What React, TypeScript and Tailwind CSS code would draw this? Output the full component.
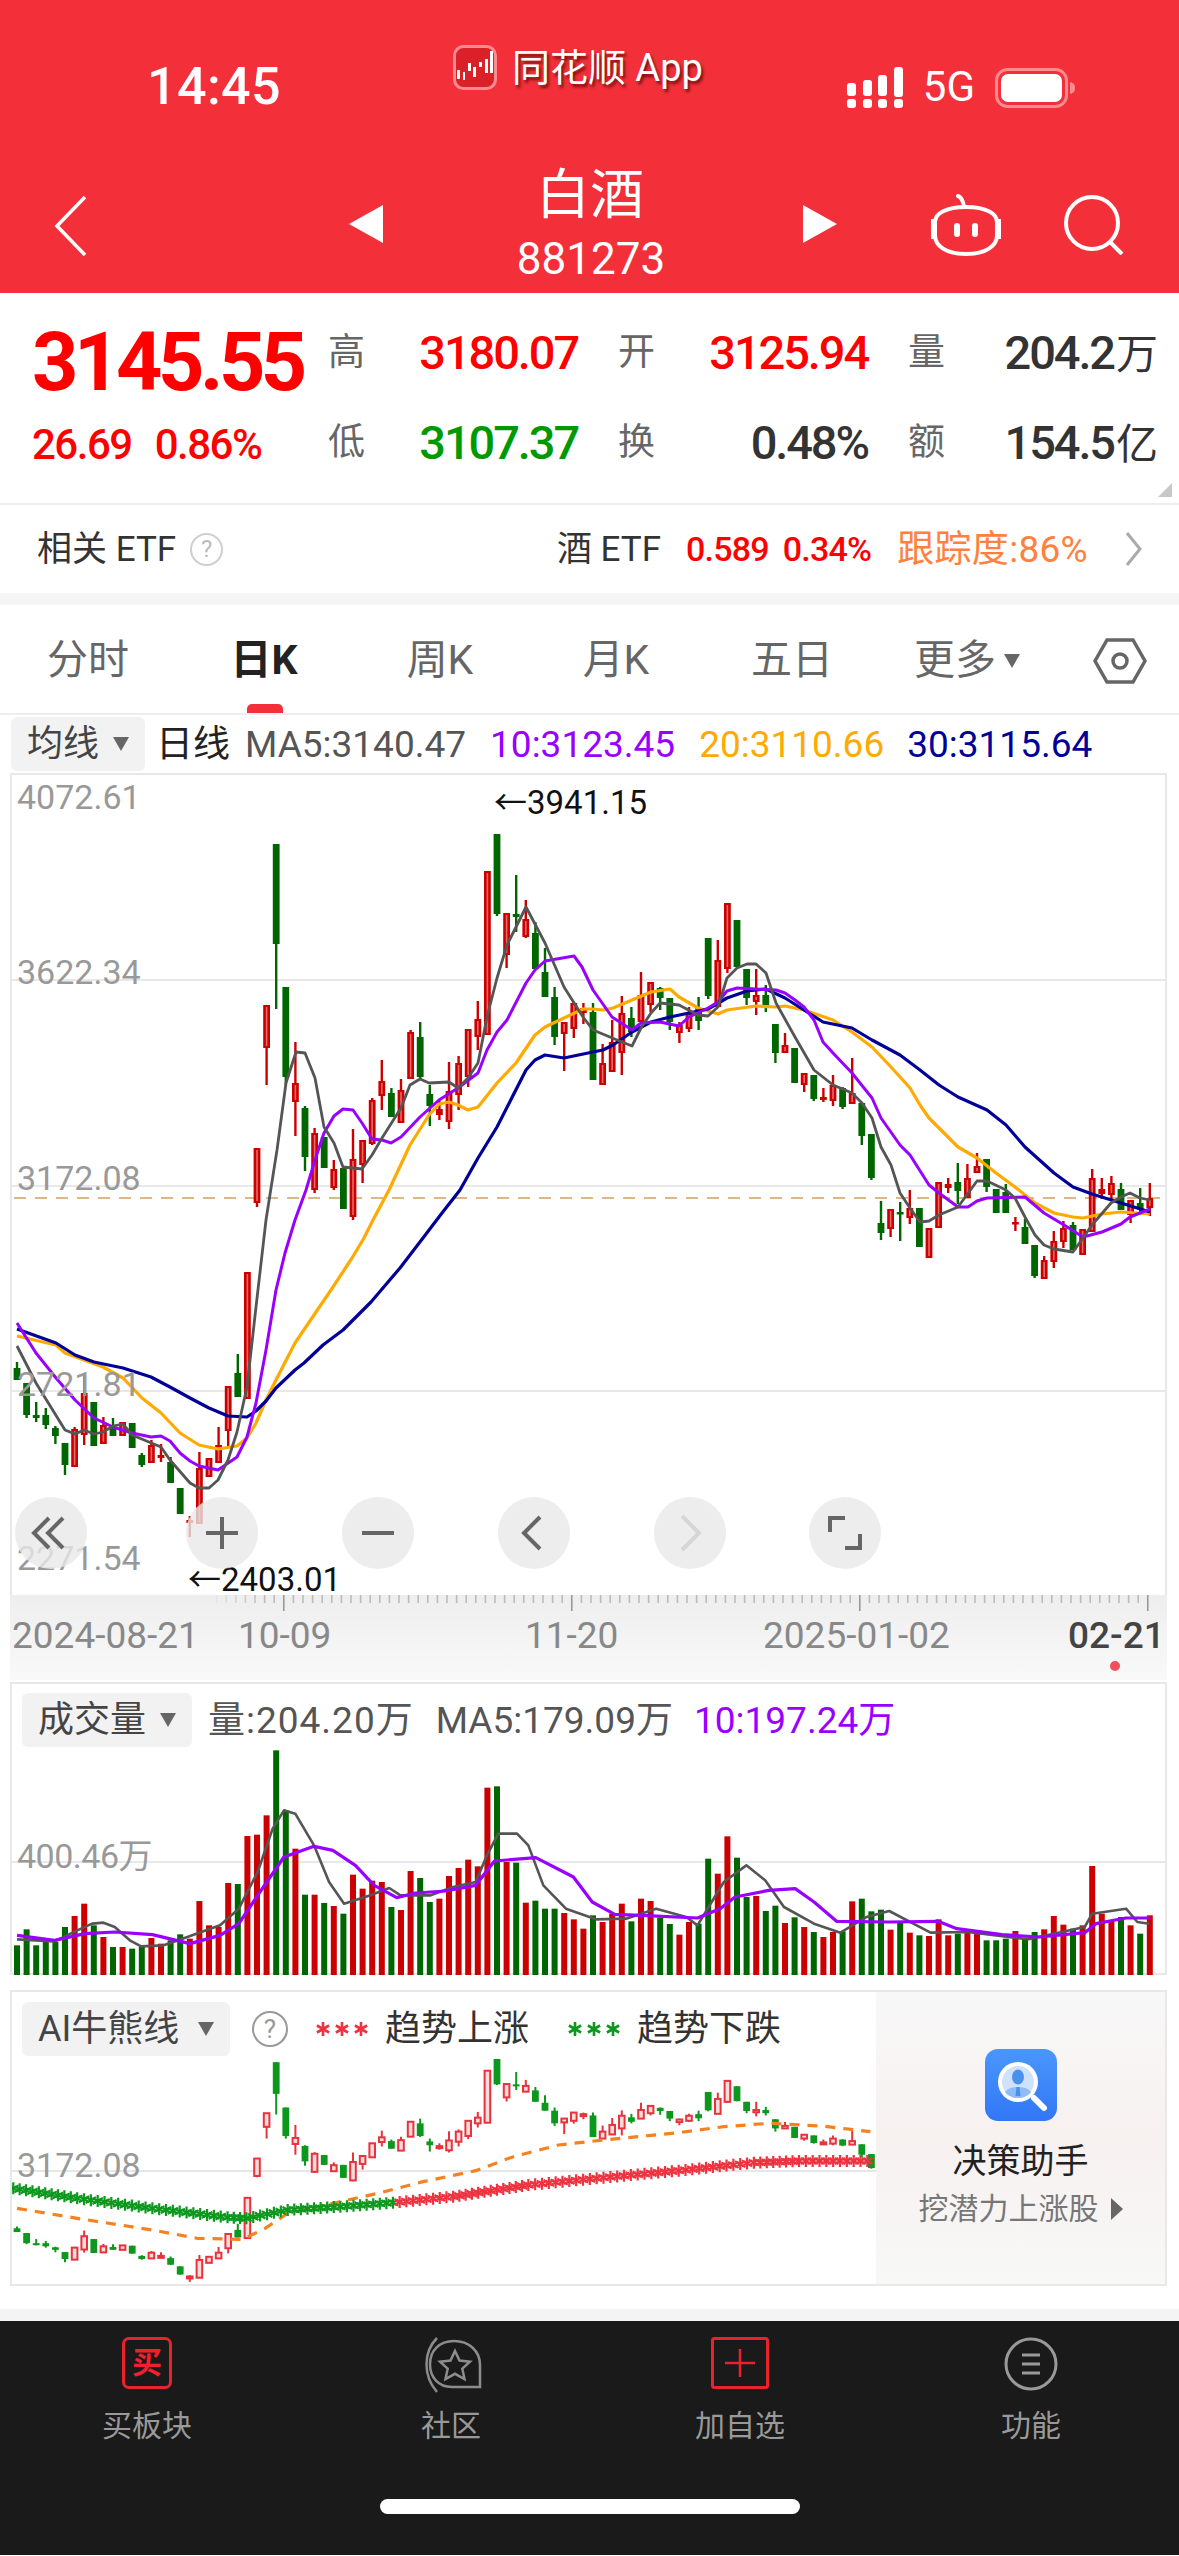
import type { ReactNode } from "react";

type Candle = [number, number, number, number, number];
type Pt = [number, number];

// [up, high, bodyTop, bodyBottom, low], y in page px
const CANDLES: Candle[] = [
  [0, 1362, 1368, 1380, 1380], [0, 1383, 1383, 1415, 1418], [0, 1402, 1415, 1418, 1422], [0, 1408, 1415, 1425, 1429],
  [0, 1426, 1428, 1436, 1444], [0, 1443, 1443, 1465, 1475], [1, 1427, 1429, 1467, 1467], [1, 1375, 1393, 1435, 1445],
  [0, 1402, 1402, 1446, 1446], [1, 1417, 1425, 1444, 1444], [0, 1418, 1427, 1436, 1436], [1, 1422, 1422, 1436, 1436],
  [0, 1423, 1423, 1448, 1448], [0, 1453, 1455, 1465, 1467], [1, 1440, 1445, 1463, 1463], [1, 1444, 1455, 1458, 1462],
  [0, 1457, 1462, 1483, 1483], [0, 1488, 1488, 1514, 1514], [1, 1516, 1520, 1523, 1537], [1, 1452, 1468, 1524, 1524],
  [1, 1458, 1458, 1477, 1477], [1, 1427, 1445, 1463, 1463], [1, 1386, 1386, 1431, 1447], [0, 1354, 1373, 1397, 1397],
  [1, 1272, 1272, 1399, 1399], [1, 1148, 1148, 1203, 1207], [1, 1005, 1005, 1048, 1085], [0, 844, 844, 944, 1009],
  [0, 987, 987, 1077, 1085], [1, 1042, 1083, 1102, 1136], [0, 1106, 1108, 1157, 1171], [1, 1128, 1133, 1190, 1193],
  [0, 1137, 1137, 1168, 1168], [1, 1160, 1169, 1188, 1190], [0, 1168, 1168, 1209, 1209], [1, 1129, 1159, 1217, 1220],
  [1, 1140, 1140, 1165, 1183], [1, 1098, 1100, 1144, 1145], [1, 1060, 1081, 1096, 1110], [0, 1088, 1093, 1117, 1117],
  [1, 1079, 1090, 1123, 1123], [1, 1030, 1032, 1079, 1079], [0, 1022, 1037, 1077, 1080], [0, 1085, 1094, 1106, 1126],
  [1, 1100, 1109, 1115, 1120], [1, 1062, 1091, 1122, 1129], [1, 1056, 1063, 1095, 1110], [1, 1029, 1029, 1077, 1087],
  [1, 1001, 1019, 1037, 1050], [1, 871, 871, 1035, 1035], [0, 834, 834, 914, 916], [1, 913, 913, 955, 968],
  [0, 875, 914, 917, 932], [1, 900, 919, 937, 938], [0, 922, 933, 969, 969], [0, 948, 972, 997, 997],
  [0, 987, 997, 1037, 1045], [1, 1022, 1022, 1034, 1071], [1, 1002, 1003, 1029, 1038], [1, 1003, 1008, 1013, 1024],
  [0, 1003, 1012, 1080, 1080], [1, 1044, 1063, 1085, 1085], [1, 1020, 1042, 1072, 1072], [1, 996, 1013, 1053, 1075],
  [0, 1007, 1018, 1032, 1037], [1, 972, 995, 1022, 1022], [1, 982, 982, 1005, 1012], [0, 987, 988, 998, 1010],
  [0, 998, 998, 1022, 1030], [1, 1022, 1025, 1033, 1043], [1, 1007, 1013, 1029, 1032], [0, 997, 1008, 1021, 1030],
  [0, 938, 938, 996, 999], [1, 940, 960, 1007, 1007], [1, 903, 903, 969, 973], [0, 920, 920, 967, 967],
  [0, 969, 969, 998, 1005], [1, 969, 995, 1002, 1015], [0, 985, 995, 1005, 1012], [0, 1024, 1024, 1053, 1063],
  [1, 1033, 1045, 1053, 1053], [0, 1048, 1048, 1083, 1083], [1, 1073, 1073, 1085, 1092], [0, 1075, 1075, 1099, 1101],
  [1, 1088, 1097, 1100, 1102], [1, 1075, 1085, 1101, 1106], [0, 1087, 1088, 1107, 1109], [1, 1058, 1093, 1104, 1104],
  [0, 1103, 1103, 1136, 1145], [0, 1134, 1134, 1178, 1180], [0, 1201, 1223, 1233, 1240], [1, 1209, 1209, 1229, 1237],
  [0, 1202, 1212, 1214, 1241], [1, 1190, 1208, 1218, 1224], [0, 1208, 1208, 1247, 1247], [1, 1228, 1228, 1258, 1258],
  [1, 1182, 1182, 1228, 1228], [1, 1178, 1184, 1188, 1193], [0, 1163, 1182, 1191, 1204], [1, 1164, 1178, 1198, 1198],
  [1, 1153, 1166, 1173, 1173], [0, 1159, 1159, 1187, 1192], [0, 1189, 1189, 1213, 1213], [0, 1184, 1192, 1213, 1213],
  [1, 1217, 1222, 1224, 1231], [0, 1219, 1227, 1244, 1244], [0, 1245, 1245, 1276, 1278], [1, 1256, 1260, 1279, 1279],
  [1, 1231, 1241, 1262, 1268], [1, 1221, 1228, 1242, 1248], [0, 1222, 1225, 1250, 1250], [1, 1229, 1229, 1255, 1255],
  [1, 1169, 1178, 1232, 1232], [1, 1178, 1189, 1194, 1199], [1, 1176, 1183, 1195, 1201], [0, 1183, 1189, 1210, 1210],
  [1, 1200, 1200, 1215, 1223], [0, 1188, 1203, 1209, 1215], [1, 1183, 1198, 1208, 1216],
];

const MA5: Pt[] = [[15,1346],[34,1383],[63,1430],[73,1434],[82,1430],[92,1434],[101,1432],[111,1426],[121,1424],[130,1435],[159,1447],[168,1460],[188,1483],[197,1488],[207,1488],[216,1480],[226,1460],[235,1432],[245,1387],[254,1307],[264,1220],[275,1150],[284,1083],[294,1052],[303,1053],[313,1078],[322,1127],[332,1143],[341,1167],[360,1169],[370,1155],[380,1138],[399,1108],[408,1085],[418,1079],[427,1083],[447,1082],[456,1088],[466,1078],[476,1063],[485,1017],[495,978],[505,945],[524,907],[543,943],[562,987],[581,1017],[591,1030],[620,1042],[630,1046],[639,1028],[649,1013],[658,1003],[677,1005],[696,1015],[706,1016],[716,1007],[725,978],[735,968],[745,964],[754,964],[764,973],[774,1003],[793,1037],[812,1070],[831,1085],[850,1093],[860,1103],[870,1118],[879,1147],[889,1165],[898,1193],[908,1208],[918,1222],[927,1221],[937,1215],[956,1207],[975,1181],[985,1181],[1004,1190],[1013,1198],[1023,1217],[1033,1235],[1042,1245],[1052,1249],[1071,1252],[1081,1238],[1090,1225],[1109,1203],[1119,1197],[1128,1193],[1138,1198],[1148,1200]];
const MA10: Pt[] = [[15,1323],[34,1353],[54,1378],[73,1400],[92,1418],[111,1427],[130,1433],[149,1437],[159,1436],[168,1441],[178,1453],[188,1461],[197,1466],[216,1470],[235,1457],[245,1437],[254,1403],[264,1350],[274,1290],[283,1253],[293,1220],[304,1190],[313,1160],[322,1133],[332,1116],[341,1109],[351,1110],[360,1123],[370,1139],[380,1140],[389,1143],[399,1137],[418,1117],[437,1100],[456,1088],[476,1073],[485,1050],[495,1032],[505,1020],[524,983],[533,970],[543,961],[572,956],[580,967],[591,990],[610,1017],[630,1030],[639,1023],[658,1022],[677,1026],[687,1017],[706,1008],[716,1002],[725,991],[735,988],[754,989],[774,990],[783,993],[793,1000],[802,1007],[812,1020],[821,1042],[831,1053],[850,1073],[870,1098],[879,1118],[898,1145],[908,1155],[927,1185],[937,1193],[956,1207],[966,1207],[975,1201],[985,1198],[1023,1197],[1042,1213],[1062,1225],[1081,1237],[1100,1232],[1119,1224],[1128,1217],[1148,1209]];
const MA20: Pt[] = [[15,1336],[54,1345],[63,1353],[82,1360],[101,1367],[121,1378],[140,1398],[159,1413],[178,1433],[197,1445],[216,1449],[235,1446],[245,1438],[254,1423],[264,1400],[274,1380],[293,1343],[312,1315],[331,1287],[350,1258],[362,1238],[371,1220],[387,1190],[408,1145],[427,1115],[437,1104],[447,1102],[456,1105],[466,1110],[476,1107],[495,1083],[514,1063],[533,1035],[543,1027],[562,1018],[581,1009],[591,1009],[601,1010],[611,1008],[630,1000],[649,992],[668,989],[677,997],[696,1008],[716,1014],[725,1010],[754,1006],[774,1007],[783,1006],[802,1010],[831,1020],[850,1032],[870,1047],[889,1067],[908,1088],[918,1105],[927,1118],[956,1147],[975,1158],[994,1173],[1013,1187],[1033,1203],[1052,1213],[1071,1217],[1081,1218],[1100,1214],[1119,1212],[1148,1214]];
const MA30: Pt[] = [[15,1329],[54,1343],[73,1355],[92,1362],[121,1368],[149,1377],[168,1387],[188,1398],[207,1408],[226,1416],[245,1417],[254,1411],[264,1401],[274,1388],[293,1370],[302,1363],[321,1345],[341,1330],[369,1302],[398,1268],[421,1238],[440,1213],[458,1190],[476,1158],[495,1127],[524,1070],[533,1060],[543,1055],[562,1058],[591,1052],[601,1050],[611,1045],[630,1032],[649,1022],[668,1017],[687,1013],[706,1009],[725,998],[745,991],[764,989],[783,998],[802,1010],[821,1022],[850,1028],[870,1040],[898,1055],[918,1070],[937,1085],[956,1097],[985,1110],[1004,1125],[1023,1147],[1052,1173],[1071,1187],[1090,1194],[1119,1203],[1148,1212]];

// volume bar tops, read off the zoomed crop (crop y, 3x)
const VOL_TOPS = [790,742,790,780,780,735,702,665,730,765,795,795,800,795,768,785,775,757,770,657,730,735,603,606,462,458,400,205,385,500,638,638,663,672,695,578,620,596,600,675,684,567,588,660,650,582,558,533,553,317,313,540,542,662,656,680,680,693,712,740,700,720,695,665,718,650,657,707,726,758,720,725,530,575,463,527,645,642,687,671,723,706,735,750,765,750,748,658,650,688,683,743,720,752,760,762,712,760,755,748,750,775,775,770,747,770,750,742,702,728,740,730,552,695,720,705,730,755,700];
const VOL_MA5: Pt[] = [[20,772],[70,778],[100,745],[120,725],[135,722],[150,735],[170,775],[185,793],[215,790],[240,770],[265,750],[290,730],[315,680],[340,570],[360,440],[375,385],[390,395],[415,490],[435,600],[455,665],[490,640],[515,618],[530,640],[570,640],[600,615],[630,600],[645,520],[660,455],[685,455],[700,490],[720,610],[750,680],[790,712],[830,710],[870,680],[910,705],[925,730],[960,600],[990,550],[1015,595],[1040,675],[1080,725],[1115,752],[1150,705],[1180,687],[1235,752],[1285,750],[1365,772],[1440,735],[1450,695],[1495,680],[1510,720],[1526,725]];
const VOL_MA10: Pt[] = [[20,760],[70,775],[110,755],[150,750],[200,758],[250,785],[290,760],[315,725],[340,640],[375,525],[415,493],[440,505],[470,550],[495,610],[525,647],[550,633],[590,627],[630,610],[655,537],[710,527],[760,585],[785,660],[815,697],[850,700],[925,708],[955,680],[975,645],[1020,625],[1055,620],[1080,660],[1110,718],[1180,720],[1245,718],[1270,740],[1330,758],[1380,765],[1440,752],[1455,725],[1495,708],[1526,708]];

const AI_TREND: Pt[] = [[15,625],[100,655],[200,685],[300,712],[325,715],[380,690],[450,680],[520,668],[600,650],[700,615],[800,593],[900,572],[1000,548],[1060,543],[1160,543]];
const AI_DASH: Pt[] = [[20,685],[100,715],[200,750],[260,775],[320,778],[350,745],[380,700],[440,670],[500,640],[560,605],[630,572],[680,530],[740,495],[800,480],[900,458],[960,440],[1020,430],[1090,438],[1155,455]];

const candleX = (i: number) => 15 + i * 9.6;
const toPoints = (pts: Pt[]) => pts.map((p) => p.join(",")).join(" ");
const volPt = ([h, v]: Pt): Pt => [h / 1.33, 1680 + v / 3];
const aiPt = ([h, v]: Pt): Pt => [h / 1.33, 1980 + v / 3];
const aiY = (y: number) => 2059 + (y - 834) * 0.317;

// walk a polyline and return points every `step` px
function sample(pts: Pt[], step: number): Pt[] {
  const out: Pt[] = [];
  for (let i = 0; i < pts.length - 1; i++) {
    const [x0, y0] = pts[i];
    const [x1, y1] = pts[i + 1];
    const n = Math.max(1, Math.round(Math.hypot(x1 - x0, y1 - y0) / step));
    for (let k = 0; k < n; k++) out.push([x0 + ((x1 - x0) * k) / n, y0 + ((y1 - y0) * k) / n]);
  }
  return out;
}

function Star({ x, y, r, color, w = 2.2 }: { x: number; y: number; r: number; color: string; w?: number }) {
  const d = r * 0.87;
  const e = r * 0.5;
  return (
    <path
      d={`M${x} ${y - r}V${y + r}M${x - d} ${y - e}L${x + d} ${y + e}M${x - d} ${y + e}L${x + d} ${y - e}`}
      stroke={color}
      strokeWidth={w}
    />
  );
}

function Caret({ className = "" }: { className?: string }) {
  return (
    <svg width="20" height="16" viewBox="0 0 20 16" className={className}>
      <path d="M2 1h16L10 15z" fill="#666" />
    </svg>
  );
}

function SelectBtn({ label, className }: { label: string; className: string }) {
  return (
    <div className={`flex items-center justify-between rounded-[6px] bg-[#f2f2f2] pl-[16px] pr-[14px] text-[36px] text-[#444] ${className}`}>
      <span className="leading-none">{label}</span>
      <Caret />
    </div>
  );
}

function RoundBtn({ children, className = "" }: { children: ReactNode; className?: string }) {
  return (
    <div className={`absolute top-[722px] flex h-[72px] w-[72px] items-center justify-center rounded-full bg-[#e8e8e8]/80 ${className}`}>
      <svg width="44" height="44" viewBox="0 0 44 44" fill="none" strokeWidth="4">
        {children}
      </svg>
    </div>
  );
}

function MainChart() {
  return (
    <svg viewBox="10 775 1155 820" className="block h-[820px] w-[1155px]">
      {[980, 1186, 1391].map((y) => (
        <line key={y} x1="10" x2="1165" y1={y} y2={y} stroke="#e8e8e8" strokeWidth="2" />
      ))}
      <line x1="12" x2="1165" y1="1198" y2="1198" stroke="#dcb888" strokeWidth="2" strokeDasharray="12 9" />
      {CANDLES.map(([up, hi, top, bottom, lo], i) => {
        const x = candleX(i);
        const color = up ? "#cc0000" : "#006600";
        return (
          <g key={i}>
            <line x1={x} x2={x} y1={hi} y2={lo} stroke={color} strokeWidth="2.4" />
            <rect x={x - 3.4} y={top} width="6.8" height={Math.max(bottom - top, 2.5)} fill={color} />
            {up === 1 && bottom - top > 6 && (
              <rect x={x - 0.8} y={top + 2} width="1.6" height={bottom - top - 4} fill="#e46a6a" />
            )}
          </g>
        );
      })}
      <polyline points={toPoints(MA20)} fill="none" stroke="#ffaa00" strokeWidth="3.2" strokeLinejoin="round" />
      <polyline points={toPoints(MA30)} fill="none" stroke="#000099" strokeWidth="3.2" strokeLinejoin="round" />
      <polyline points={toPoints(MA10)} fill="none" stroke="#9900ff" strokeWidth="3" strokeLinejoin="round" />
      <polyline points={toPoints(MA5)} fill="none" stroke="#555555" strokeWidth="2.8" strokeLinejoin="round" />
    </svg>
  );
}

function VolumeChart() {
  return (
    <svg viewBox="10 1682 1155 291" className="block h-[291px] w-[1155px]">
      <line x1="10" x2="1165" y1="1860" y2="1860" stroke="#e8e8e8" strokeWidth="2" />
      {VOL_TOPS.map((v, i) => (
        <rect
          key={i}
          x={candleX(i) - 3}
          y={1680 + v / 3}
          width="6"
          height={1973 - (1680 + v / 3)}
          fill={CANDLES[i]?.[0] ? "#cc0000" : "#006600"}
        />
      ))}
      <polyline points={toPoints(VOL_MA5.map(volPt))} fill="none" stroke="#555555" strokeWidth="2.6" strokeLinejoin="round" />
      <polyline points={toPoints(VOL_MA10.map(volPt))} fill="none" stroke="#9900ff" strokeWidth="3.2" strokeLinejoin="round" />
    </svg>
  );
}

function AiChart() {
  const stars = sample(AI_TREND.map(aiPt), 6.6);
  return (
    <svg viewBox="10 1992 866 293" className="block h-[293px] w-[866px]">
      <line x1="10" x2="876" y1="2171" y2="2171" stroke="#e6e6e6" strokeWidth="2" />
      {CANDLES.slice(0, 90).map(([up, hi, top, bottom, lo], i) => {
        const x = candleX(i);
        const color = up ? "#e8323c" : "#0c981c";
        const t = aiY(top);
        const h = Math.max((bottom - top) * 0.317, 2);
        return (
          <g key={i}>
            <line x1={x} x2={x} y1={aiY(hi)} y2={aiY(lo)} stroke={color} strokeWidth="2" />
            {up ? (
              <rect x={x - 2.8} y={t} width="5.6" height={h} fill="#fbdcdc" stroke={color} strokeWidth="2" />
            ) : (
              <rect x={x - 3.4} y={t} width="6.8" height={h} fill={color} />
            )}
          </g>
        );
      })}
      <polyline
        points={toPoints(AI_DASH.map(aiPt))}
        fill="none"
        stroke="#f58220"
        strokeWidth="3.2"
        strokeDasharray="10 8"
      />
      {stars.map(([x, y], i) => (
        <Star key={i} x={x} y={y} r={6} color={x < 392 ? "#0c981c" : "#ee3340"} />
      ))}
    </svg>
  );
}

function Ticks() {
  const items = Array.from({ length: 98 }, (_, k) => k + 21);
  return (
    <svg viewBox="10 1595 1155 18" className="block h-[18px] w-[1155px]">
      {items.map((i) => {
        const major = (i - 28) % 30 === 0;
        return (
          <line
            key={i}
            x1={candleX(i)}
            x2={candleX(i)}
            y1="1595"
            y2={major ? 1611 : 1603}
            stroke={major ? "#999" : "#bbb"}
            strokeWidth="1.6"
            opacity={i < 26 ? (i - 20) / 6 : 1}
          />
        );
      })}
    </svg>
  );
}

function Stat({ label, value, tone, unit }: { label: string; value: string; tone: string; unit?: string }) {
  return (
    <div className="flex items-center justify-between">
      <span className="text-[37px] leading-none text-[#666]">{label}</span>
      <span className={`flex items-baseline text-[47px] font-medium leading-none tracking-[-2.1px] ${tone}`}>
        {value}
        {unit && <span className="ml-[2px] text-[42px] font-normal tracking-normal">{unit}</span>}
      </span>
    </div>
  );
}

export default function App() {
  return (
    <div className="h-[2556px] w-[1179px] overflow-hidden bg-white font-['Roboto','Noto_Sans_CJK_SC',sans-serif]">
      {/* red header */}
      <header className="h-[293px] bg-[#f33039] text-white">
        <div className="flex h-[120px] items-start">
          <span className="ml-[147px] mt-[60px] text-[52px] font-medium leading-[54px] tracking-[0.4px]">14:45</span>
          <svg width="44" height="45" viewBox="0 0 44 45" className="ml-[172px] mt-[45px]">
            <rect x="1.5" y="1.5" width="41" height="42" rx="9" fill="#da2128" stroke="#ff8b90" strokeWidth="3" />
            <g fill="#fff">
              <rect x="4" y="25" width="3" height="9" />
              <rect x="10" y="27" width="2" height="8" />
              <rect x="15" y="18" width="3" height="8" />
              <rect x="20" y="22" width="3" height="10" />
              <rect x="26" y="17" width="3" height="5" />
              <rect x="32" y="14" width="3" height="14" />
              <rect x="37" y="6" width="3" height="22" />
            </g>
          </svg>
          <span className="ml-[15px] mt-[44px] text-[38px] leading-[48px] [text-shadow:2px_3px_3px_rgba(70,0,0,0.7)]">同花顺 App</span>
          <svg width="56" height="42" viewBox="0 0 56 42" className="ml-[144px] mt-[66px]" fill="#fff">
            <rect x="0" y="17" width="9" height="13" rx="3" />
            <rect x="16" y="14" width="9" height="16" rx="3" />
            <rect x="31" y="9" width="9" height="21" rx="3" />
            <rect x="47" y="1" width="9" height="30" rx="3" />
            <rect x="0" y="33" width="9" height="9" rx="3" />
            <rect x="16" y="33" width="9" height="9" rx="3" />
            <rect x="31" y="33" width="9" height="9" rx="3" />
            <rect x="47" y="33" width="9" height="9" rx="3" />
          </svg>
          <span className="ml-[20px] mt-[65px] text-[42px] leading-[44px]">5G</span>
          <svg width="82" height="40" viewBox="0 0 82 40" className="ml-[20px] mt-[68px]">
            <rect x="1.5" y="1.5" width="70" height="37" rx="11" fill="none" stroke="#ff8b90" strokeWidth="3" />
            <rect x="6" y="6" width="61" height="28" rx="7" fill="#fff" />
            <path d="M75 14c4 1 5 3 5 6s-1 5-5 6z" fill="#ff8b90" />
          </svg>
        </div>
        <div className="flex h-[173px] items-start">
          <svg width="34" height="62" viewBox="0 0 34 62" className="ml-[54px] mt-[75px]" fill="none" stroke="#fff" strokeWidth="3.5">
            <path d="M31 2 3 31l28 29" />
          </svg>
          <svg width="34" height="38" viewBox="0 0 34 38" className="ml-[261px] mt-[85px]">
            <path d="M34 0v38L0 19z" fill="#fff" />
          </svg>
          <div className="flex w-[420px] flex-col items-center pr-[6px]">
            <span className="mt-[46px] text-[54px] leading-[60px]">白酒</span>
            <span className="ml-[2px] mt-[10px] text-[44px] leading-[46px]">881273</span>
          </div>
          <svg width="34" height="38" viewBox="0 0 34 38" className="mt-[85px]">
            <path d="M0 0v38l34-19z" fill="#fff" />
          </svg>
          <svg width="70" height="62" viewBox="0 0 70 62" className="ml-[94px] mt-[74px]" fill="none" stroke="#fff" strokeWidth="4">
            <path d="M27 2c3 1 5 4 6 11" strokeLinecap="round" />
            <path d="M4 28c0-8 10-15 31-15s31 7 31 15v13c0 11-11 19-31 19S4 52 4 41z" />
            <path d="M4 27H2v16h3M66 27h2v16h-3" />
            <rect x="23" y="29" width="6" height="14" rx="3" fill="#fff" stroke="none" />
            <rect x="41" y="29" width="6" height="14" rx="3" fill="#fff" stroke="none" />
          </svg>
          <svg width="60" height="60" viewBox="0 0 60 60" className="ml-[63px] mt-[75px]" fill="none" stroke="#fff" strokeWidth="4">
            <circle cx="28" cy="28" r="26" />
            <path d="m46 47 12 12" />
          </svg>
        </div>
      </header>

      {/* quote block */}
      <section className="relative flex h-[212px] border-b-2 border-[#eeeeee]">
        <div className="w-[328px] pl-[32px]">
          <div className="mt-[30px] text-[81px] font-bold leading-[80px] tracking-[-4.500px] text-[#ff0000]">3145.55</div>
          <div className="mt-[19px] flex gap-[23px] text-[42px] font-medium leading-[46px] tracking-[-1.500px] text-[#ff0000]">
            <span>26.69</span>
            <span>0.86%</span>
          </div>
        </div>
        <div className="mt-[36px] grid w-[830px] grid-cols-[250px_250px_250px] gap-x-[40px] gap-y-[43px] self-start">
          <Stat label="高" value="3180.07" tone="text-[#ff0000]" />
          <Stat label="开" value="3125.94" tone="text-[#ff0000]" />
          <Stat label="量" value="204.2" unit="万" tone="text-[#333333]" />
          <Stat label="低" value="3107.37" tone="text-[#009900]" />
          <Stat label="换" value="0.48%" tone="text-[#333333]" />
          <Stat label="额" value="154.5" unit="亿" tone="text-[#333333]" />
        </div>
        <svg width="14" height="14" viewBox="0 0 14 14" className="absolute bottom-[6px] right-[7px]">
          <path d="M14 0v14H0z" fill="#c8c8c8" />
        </svg>
      </section>

      {/* ETF row */}
      <section className="flex h-[88px] items-center pl-[37px] pr-[36px]">
        <span className="text-[35px] leading-none text-[#333]">相关 ETF</span>
        <span className="ml-[14px] flex h-[33px] w-[33px] items-center justify-center rounded-full border-2 border-[#cfcfcf] text-[24px] leading-none text-[#bbb]">?</span>
        <span className="ml-auto text-[35px] leading-none text-[#333]">酒 ETF</span>
        <span className="ml-[25px] text-[34px] font-medium leading-none tracking-[-0.8px] text-[#ff0000]">0.589</span>
        <span className="ml-[14px] text-[34px] font-medium leading-none tracking-[-0.8px] text-[#ff0000]">0.34%</span>
        <span className="ml-[26px] text-[37px] leading-none tracking-[0.3px] text-[#ff8040]">跟踪度:86%</span>
        <svg width="18" height="34" viewBox="0 0 18 34" className="ml-[37px]" fill="none" stroke="#aaa" strokeWidth="3">
          <path d="m2 1 13 16L2 33" />
        </svg>
      </section>
      <div className="h-[12px] bg-[#f5f5f5]" />

      {/* period tabs */}
      <nav className="relative flex h-[110px] items-center border-b-2 border-[#eeeeee] pt-[3px] text-[41px] text-[#666]">
        <span className="w-[176px] text-center leading-none">分时</span>
        <span className="w-[176px] text-center font-bold leading-none text-[#222]">日K</span>
        <span className="w-[176px] text-center leading-none">周K</span>
        <span className="w-[176px] text-center leading-none">月K</span>
        <span className="w-[176px] text-center leading-none">五日</span>
        <span className="flex w-[176px] items-center justify-center gap-[6px] leading-none">
          更多
          <Caret />
        </span>
        <svg width="54" height="48" viewBox="0 0 54 48" fill="none" stroke="#666" strokeWidth="3.5" className="ml-[37px]">
          <path d="M14 3h26l12 21-12 21H14L2 24z" />
          <circle cx="27" cy="24" r="7" />
        </svg>
        <span className="absolute bottom-0 left-[247px] h-[9px] w-[36px] rounded-t-[5px] bg-[#f33039]" />
      </nav>

      {/* MA legend */}
      <div className="flex h-[58px] items-center text-[37px] leading-none">
        <SelectBtn label="均线" className="ml-[11px] h-[54px] w-[134px]" />
        <span className="ml-[11px] text-[#222]">日线</span>
        <span className="ml-[15px] text-[#555]">MA5:3140.47</span>
        <span className="ml-[24px] text-[#9900ff]">10:3123.45</span>
        <span className="ml-[24px] text-[#ffaa00]">20:3110.66</span>
        <span className="ml-[23px] text-[#000099]">30:3115.64</span>
      </div>

      {/* candlestick chart */}
      <div className="relative ml-[10px] h-[822px] w-[1157px] border-x-2 border-t-2 border-[#e8e8e8]">
        <MainChart />
        <span className="absolute left-[5px] top-[5px] text-[34px] leading-none text-[#999]">4072.61</span>
        <span className="absolute left-[5px] top-[180px] text-[34px] leading-none text-[#999]">3622.34</span>
        <span className="absolute left-[5px] top-[386px] text-[34px] leading-none text-[#999]">3172.08</span>
        <span className="absolute left-[5px] top-[592px] text-[34px] leading-none text-[#999]">2721.81</span>
        <span className="absolute left-[5px] top-[766px] text-[34px] leading-none text-[#999]">2271.54</span>
        <span className="absolute left-[482px] top-[11px] text-[33px] leading-none text-[#111]">←3941.15</span>
        <span className="absolute left-[176px] top-[788px] text-[33px] leading-none text-[#111]">←2403.01</span>
        <RoundBtn className="left-[3px]">
          <path d="M20 7 5 22l15 15M34 7 19 22l15 15" stroke="#666" />
        </RoundBtn>
        <RoundBtn className="left-[174px]">
          <path d="M6 22h32M22 6v32" stroke="#666" />
        </RoundBtn>
        <RoundBtn className="left-[330px]">
          <path d="M6 22h32" stroke="#666" />
        </RoundBtn>
        <RoundBtn className="left-[486px]">
          <path d="M28 6 12 22l16 16" stroke="#666" />
        </RoundBtn>
        <RoundBtn className="left-[642px]">
          <path d="m14 5 17 17-17 17" stroke="#d6d6d6" />
        </RoundBtn>
        <RoundBtn className="left-[797px]">
          <path d="M7 21V7h15M37 23v14H22" stroke="#666" />
        </RoundBtn>
      </div>

      {/* date axis */}
      <div className="ml-[10px] h-[85px] w-[1157px] bg-gradient-to-b from-[#eeeeee] to-[#f9f9f9]">
        <Ticks />
        <div className="mt-[4px] flex text-[37px] leading-none text-[#888]">
          <span className="ml-[2px] w-[226px]">2024-08-21</span>
          <span className="w-[287px]">10-09</span>
          <span className="w-[238px]">11-20</span>
          <span className="w-[305px]">2025-01-02</span>
          <span className="font-medium text-[#444]">02-21</span>
        </div>
        <div className="ml-[1100px] mt-[7px] h-[10px] w-[10px] rounded-full bg-[#f0505a]" />
      </div>

      {/* volume */}
      <div className="relative ml-[10px] mt-[2px] h-[293px] w-[1157px] border-x-2 border-y-2 border-[#e8e8e8]">
        <VolumeChart />
        <div className="absolute left-[10px] top-[9px] flex items-center text-[37px] leading-none">
          <SelectBtn label="成交量" className="h-[54px] w-[170px]" />
          <span className="ml-[16px] tracking-[1px] text-[#555]">量:204.20万</span>
          <span className="ml-[22px] text-[#555]">MA5:179.09万</span>
          <span className="ml-[21px] text-[#9900ff]">10:197.24万</span>
        </div>
        <span className="absolute left-[5px] top-[155px] text-[34px] leading-none tracking-[-0.5px] text-[#999]">400.46万</span>
      </div>

      {/* AI 牛熊线 */}
      <div className="ml-[10px] mt-[15px] flex h-[296px] w-[1157px] border-x-2 border-y-2 border-[#e8e8e8]">
        <div className="relative w-[864px] overflow-hidden">
          <AiChart />
          <div className="absolute left-[10px] top-[10px] flex items-center text-[35px] leading-none">
            <SelectBtn label="AI牛熊线" className="h-[54px] w-[208px]" />
            <span className="ml-[22px] flex h-[36px] w-[36px] items-center justify-center rounded-full border-2 border-[#999] text-[26px] text-[#999]">?</span>
            <svg width="54" height="20" viewBox="0 0 54 20" className="ml-[27px]">
              <Star x={8} y={10} r={7} color="#ee3340" w={2.6} />
              <Star x={27} y={10} r={7} color="#ee3340" w={2.6} />
              <Star x={46} y={10} r={7} color="#ee3340" w={2.6} />
            </svg>
            <span className="ml-[16px] text-[36px] text-[#333]">趋势上涨</span>
            <svg width="54" height="20" viewBox="0 0 54 20" className="ml-[38px]">
              <Star x={8} y={10} r={7} color="#0c981c" w={2.6} />
              <Star x={27} y={10} r={7} color="#0c981c" w={2.6} />
              <Star x={46} y={10} r={7} color="#0c981c" w={2.6} />
            </svg>
            <span className="ml-[16px] text-[36px] text-[#333]">趋势下跌</span>
          </div>
          <span className="absolute left-[5px] top-[156px] text-[34px] leading-none text-[#999]">3172.08</span>
        </div>
        <div className="flex w-[289px] flex-col items-center bg-gradient-to-b from-[#f8f8f8] via-[#f7f1f0] to-[#f7f8f7] pt-[57px]">
          <svg width="72" height="72" viewBox="0 0 72 72">
            <defs>
              <linearGradient id="decisionBg" x1="0" y1="0" x2="0" y2="1">
                <stop offset="0" stopColor="#4a97fb" />
                <stop offset="1" stopColor="#3276f6" />
              </linearGradient>
            </defs>
            <rect width="72" height="72" rx="13" fill="url(#decisionBg)" />
            <circle cx="33" cy="33" r="20" fill="#fff" />
            <circle cx="33" cy="33" r="16" fill="#cfe2fc" />
            <ellipse cx="33" cy="28" rx="6" ry="7.500" fill="#4a90ee" />
            <path d="M20 43c3-4 8-5 13-5s10 1 13 5c-3 4-8 6-13 6s-10-2-13-6z" fill="#8fbcf5" />
            <path d="M31.500 38h3l1 9h-5z" fill="#4a90ee" />
            <path d="m49 49 10 10" stroke="#fff" strokeWidth="6" strokeLinecap="round" />
          </svg>
          <span className="mt-[20px] text-[34px] leading-[40px] text-[#222]">决策助手</span>
          <div className="mt-[10px] flex items-center text-[30px] leading-[36px] text-[#777]">
            挖潜力上涨股
            <svg width="12" height="22" viewBox="0 0 12 22" className="ml-[12px]">
              <path d="M0 0v22l12-11z" fill="#666" />
            </svg>
          </div>
        </div>
      </div>

      <div className="mt-[23px] h-[12px] bg-[#f4f4f4]" />

      {/* bottom bar */}
      <footer className="h-[234px] bg-[#1a1a1a] pt-[16px] text-[30px] text-[#999]">
        <div className="flex">
          <div className="ml-[67px] flex w-[160px] flex-col items-center">
            <div className="flex h-[52px] w-[50px] items-center justify-center rounded-[7px] border-[3px] border-[#e8232d] text-[30px] font-bold leading-none text-[#f0202c]">买</div>
            <span className="mt-[17px] leading-[40px]">买板块</span>
          </div>
          <div className="ml-[144px] flex w-[160px] flex-col items-center">
            <svg width="62" height="56" viewBox="0 0 62 56" fill="none" stroke="#8c8c8c" strokeWidth="2.5">
              <path d="M17 1C3 15 3 39 17 55" />
              <path d="M60 50H32C18 50 10 40 10 27S19 4 34 4s26 10 26 24z" />
              <path d="m35 14 4.500 9.500 10.500 1.200-7.700 7 2.200 10.300-9.500-5.200-9.500 5.200 2.200-10.300-7.700-7 10.500-1.200z" />
            </svg>
            <span className="mt-[13px] leading-[40px]">社区</span>
          </div>
          <div className="ml-[129px] flex w-[160px] flex-col items-center">
            <svg width="58" height="52" viewBox="0 0 58 52" fill="none" stroke="#e8232d">
              <rect x="1.500" y="1.500" width="55" height="49" rx="2" strokeWidth="3" />
              <path d="M14 26h30M29 12v28" strokeWidth="2.500" />
            </svg>
            <span className="mt-[17px] leading-[40px]">加自选</span>
          </div>
          <div className="ml-[131px] flex w-[160px] flex-col items-center">
            <svg width="54" height="54" viewBox="0 0 54 54" fill="none" stroke="#999" strokeWidth="3">
              <circle cx="27" cy="27" r="25" />
              <path d="M18 18h18M18 27h18M18 36h18" />
            </svg>
            <span className="mt-[15px] leading-[40px]">功能</span>
          </div>
        </div>
        <div className="ml-[380px] mt-[53px] h-[15px] w-[420px] rounded-full bg-white" />
      </footer>
    </div>
  );
}
